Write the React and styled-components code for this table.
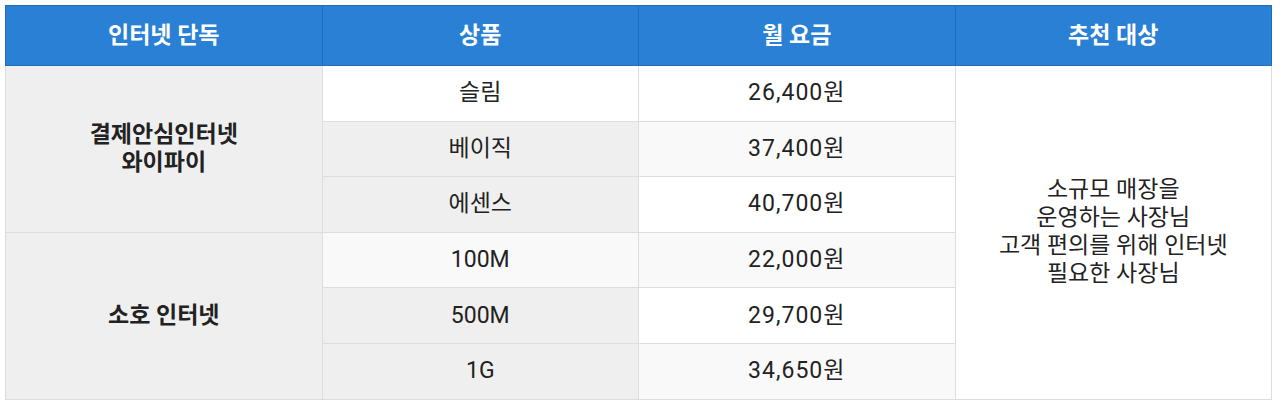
import React from "react";
import styled, { createGlobalStyle } from "styled-components";

const GlobalStyle = createGlobalStyle`
  body {
    margin: 0;
    background: #fff;
    font-family: Roboto, "Noto Sans CJK KR", sans-serif;
  }
`;

const Wrapper = styled.div`
  padding: 5px 8px 0 5px;
`;

const Table = styled.table`
  width: 100%;
  border-collapse: collapse;
  table-layout: fixed;
  font-size: 23px;
  line-height: 28px;
  color: #222;
  text-align: center;
`;

const Th = styled.th`
  background: #2a80d5;
  color: #fff;
  font-weight: 700;
  height: 59px;
  padding: 0 10px;
  border: 1px solid #1f6cb9;
`;

const Row = styled.tr`
  background: ${(props) => (props.$striped ? "#f9f9f9" : "#fff")};
`;

const Td = styled.td`
  height: 54.6px;
  padding: 0 10px;
  border: 1px solid #dddddd;
  background: ${(props) => (props.$shade ? "#efefef" : "transparent")};
  font-weight: ${(props) => (props.$bold ? 700 : 400)};
`;

const Price = styled(Td)`
  letter-spacing: 1px;
`;

const Target = styled(Td)`
  background: #fff;
`;

const groups = [
  {
    name: ["결제안심인터넷", "와이파이"],
    items: [
      ["슬림", "26,400원"],
      ["베이직", "37,400원"],
      ["에센스", "40,700원"],
    ],
  },
  {
    name: ["소호 인터넷"],
    items: [
      ["100M", "22,000원"],
      ["500M", "29,700원"],
      ["1G", "34,650원"],
    ],
  },
];

const targetLines = [
  "소규모 매장을",
  "운영하는 사장님",
  "고객 편의를 위해 인터넷",
  "필요한 사장님",
];

const App = () => {
  let rowIndex = 0;
  return (
    <Wrapper>
      <GlobalStyle />
      <Table>
        <thead>
          <tr>
            <Th>인터넷 단독</Th>
            <Th>상품</Th>
            <Th>월 요금</Th>
            <Th>추천 대상</Th>
          </tr>
        </thead>
        <tbody>
          {groups.map((group, g) =>
            group.items.map(([product, price], i) => {
              rowIndex += 1;
              const striped = rowIndex % 2 === 0;
              return (
                <Row key={`${g}-${i}`} $striped={striped}>
                  {i === 0 && (
                    <Td rowSpan={group.items.length} $shade $bold>
                      {group.name.map((line, k) => (
                        <div key={k}>{line}</div>
                      ))}
                    </Td>
                  )}
                  <Td $shade={i !== 0}>{product}</Td>
                  <Price>{price}</Price>
                  {rowIndex === 1 && (
                    <Target rowSpan={6}>
                      {targetLines.map((line, k) => (
                        <div key={k}>{line}</div>
                      ))}
                    </Target>
                  )}
                </Row>
              );
            })
          )}
        </tbody>
      </Table>
    </Wrapper>
  );
};

export default App;
